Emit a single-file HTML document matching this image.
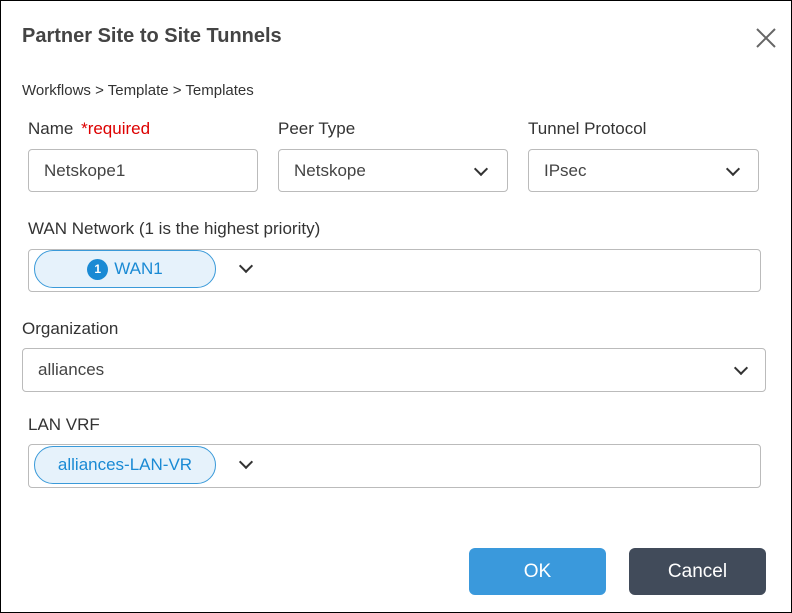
<!DOCTYPE html><html><head><style>
body{margin:0;width:792px;height:613px;position:relative;font-family:"Liberation Sans",sans-serif;color:#333;background:#fff;overflow:hidden}
.frame{position:absolute;left:0;top:0;width:790px;height:611px;border:1px solid #000}
.a{position:absolute}
.lbl{position:absolute;font-size:17px;color:#333}
.box{position:absolute;border:1px solid #bbb;border-radius:4px;box-sizing:border-box;font-size:17px;color:#444;padding-left:15px;display:flex;align-items:center}
.chev{position:absolute;width:8px;height:8px;border-right:2px solid #333;border-bottom:2px solid #333;transform:rotate(45deg)}
.chip{position:absolute;background:#e6f2fb;border:1px solid #3a9ad9;border-radius:19px;box-sizing:border-box;color:#1a8ad4;font-size:17px;display:flex;align-items:center;justify-content:center}
.btn{position:absolute;top:548px;width:137px;height:47px;border-radius:6px;color:#fff;font-size:19px;display:flex;align-items:center;justify-content:center}
</style></head><body><div class="frame"></div>
<div class="a" style="left:22px;top:25px;font-size:20px;font-weight:bold;color:#444">Partner Site to Site Tunnels</div>
<svg class="a" style="left:755px;top:27px" width="22" height="22"><path d="M2 2L20 20M20 2L2 20" stroke="#666" stroke-width="2"/></svg>
<div class="a" style="left:22px;top:82px;font-size:15px;color:#333">Workflows &gt; Template &gt; Templates</div>
<div class="lbl" style="left:28px;top:119px">Name <span style="color:#d00;margin-left:3px">*required</span></div>
<div class="lbl" style="left:278px;top:119px">Peer Type</div>
<div class="lbl" style="left:528px;top:119px">Tunnel Protocol</div>
<div class="box" style="left:28px;top:149px;width:230px;height:43px">Netskope1</div>
<div class="box" style="left:278px;top:149px;width:230px;height:43px">Netskope</div>
<div class="chev" style="left:476px;top:164px"></div>
<div class="box" style="left:528px;top:149px;width:231px;height:43px">IPsec</div>
<div class="chev" style="left:728px;top:164px"></div>
<div class="lbl" style="left:28px;top:219px">WAN Network (1 is the highest priority)</div>
<div class="box" style="left:28px;top:249px;width:733px;height:43px"></div>
<div class="chip" style="left:34px;top:250px;width:182px;height:38px"><span style="display:inline-block;width:21px;height:21px;border-radius:50%;background:#1a8ad4;color:#fff;font-size:12px;font-weight:bold;text-align:center;line-height:21px;margin-right:6px">1</span>WAN1</div>
<div class="chev" style="left:241px;top:261px"></div>
<div class="lbl" style="left:22px;top:319px">Organization</div>
<div class="box" style="left:22px;top:348px;width:744px;height:44px">alliances</div>
<div class="chev" style="left:736px;top:363px"></div>
<div class="lbl" style="left:28px;top:415px">LAN VRF</div>
<div class="box" style="left:28px;top:444px;width:733px;height:44px"></div>
<div class="chip" style="left:34px;top:446px;width:182px;height:38px">alliances-LAN-VR</div>
<div class="chev" style="left:241px;top:457px"></div>
<div class="btn" style="left:469px;background:#3a99dc">OK</div>
<div class="btn" style="left:629px;background:#414b5a">Cancel</div>
</body></html>
